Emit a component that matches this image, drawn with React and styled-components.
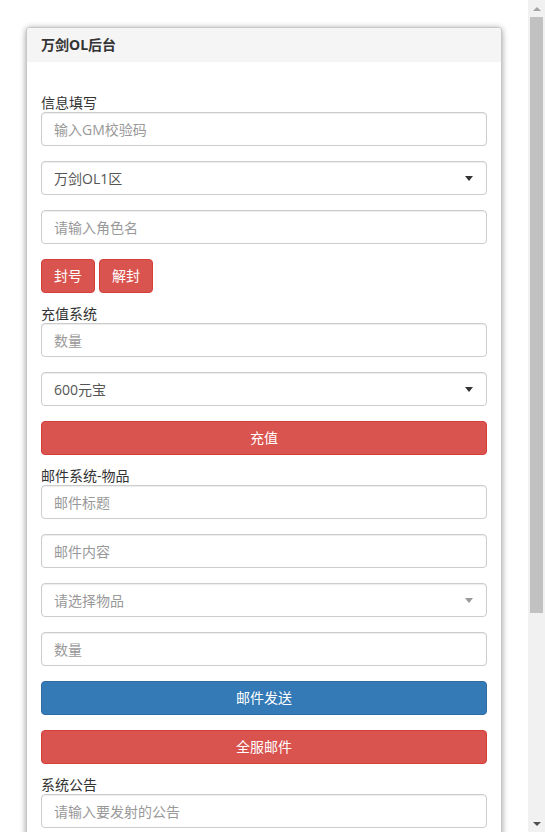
import styled, { createGlobalStyle } from "styled-components";

const GlobalStyle = createGlobalStyle`
  html, body {
    margin: 0;
    padding: 0;
    height: 100%;
    overflow: hidden;
    background: #fff;
  }
  body {
    font-family: "Open Sans", "Noto Sans CJK SC", sans-serif;
    font-size: 14px;
    color: #333;
  }
  * {
    box-sizing: border-box;
  }
`;

const Page = styled.div`
  display: flex;
  height: 100vh;
`;

const Main = styled.div`
  flex: 1;
  padding: 27px 26px 0;
  overflow: hidden;
`;

const Scrollbar = styled.div`
  width: 17px;
  background: #f1f1f1;
  display: flex;
  flex-direction: column;
`;

const ScrollArrow = styled.div`
  height: 17px;
  display: flex;
  align-items: center;
  justify-content: center;

  &::after {
    content: "";
    border-left: 4px solid transparent;
    border-right: 4px solid transparent;
    ${(props) =>
      props.down
        ? "border-top: 4px solid #505050;"
        : "border-bottom: 4px solid #a3a3a3;"}
  }
`;

const ScrollThumb = styled.div`
  height: 596px;
  margin: 0 2px;
  background: #c1c1c1;
`;

const ScrollTrack = styled.div`
  flex: 1;
`;

const Panel = styled.div`
  background: #fff;
  border: 1px solid #c8c8c8;
  border-radius: 4px;
  box-shadow: 0 1px 6px rgba(0, 0, 0, 0.4);
  min-height: 900px;
`;

const PanelHeading = styled.div`
  background: #f5f5f5;
  padding: 7px 14px;
  line-height: 20px;
  font-weight: bold;
  color: #333;
  border-radius: 3px 3px 0 0;
`;

const PanelBody = styled.div`
  padding: 30px 14px 15px;
`;

const Label = styled.div`
  padding-top: 2px;
  line-height: 18px;
  color: #333;
`;

const FormGroup = styled.div`
  margin-bottom: 15px;
  position: relative;
`;

const Input = styled.input`
  display: block;
  width: 100%;
  height: 34px;
  padding: 6px 12px;
  font: inherit;
  font-size: 14px;
  color: #555;
  background: #fff;
  border: 1px solid #ccc;
  border-radius: 4px;
  box-shadow: inset 0 1px 1px rgba(0, 0, 0, 0.075);
  outline: none;

  &::placeholder {
    color: #999;
  }
`;

const SelectBox = styled.select`
  display: block;
  width: 100%;
  height: 34px;
  padding: 6px 12px;
  font: inherit;
  font-size: 14px;
  color: ${(props) => (props.placeholder ? "#999" : "#555")};
  background: #fff;
  border: 1px solid #ccc;
  border-radius: 4px;
  box-shadow: inset 0 1px 1px rgba(0, 0, 0, 0.075);
  appearance: none;
  outline: none;
`;

const Caret = styled.span`
  position: absolute;
  right: 14px;
  top: 15px;
  border-left: 4px solid transparent;
  border-right: 4px solid transparent;
  border-top: 5px solid ${(props) => (props.muted ? "#999" : "#333")};
  pointer-events: none;
`;

const ButtonRow = styled.div`
  display: flex;
  gap: 4px;
  margin-bottom: 10px;
`;

const Button = styled.button`
  height: 34px;
  padding: 6px 12px;
  font: inherit;
  font-size: 14px;
  line-height: 20px;
  color: #fff;
  border-radius: 4px;
  border: 1px solid
    ${(props) => (props.variant === "primary" ? "#2e6da4" : "#d43f3a")};
  background: ${(props) =>
    props.variant === "primary" ? "#337ab7" : "#d9534f"};
  flex: ${(props) => (props.block ? 1 : "none")};
  cursor: pointer;
`;

const Select = ({ children, placeholder }) => (
  <FormGroup>
    <SelectBox placeholder={placeholder ? 1 : undefined} defaultValue="">
      <option value="">{children}</option>
    </SelectBox>
    <Caret muted={placeholder} />
  </FormGroup>
);

const Field = ({ placeholder }) => (
  <FormGroup>
    <Input placeholder={placeholder} />
  </FormGroup>
);

const App = () => {
  return (
    <Page>
      <GlobalStyle />
      <Main>
        <Panel>
          <PanelHeading>万剑OL后台</PanelHeading>
          <PanelBody>
            <Label>信息填写</Label>
            <Field placeholder="输入GM校验码" />
            <Select>万剑OL1区</Select>
            <Field placeholder="请输入角色名" />
            <ButtonRow>
              <Button>封号</Button>
              <Button>解封</Button>
            </ButtonRow>

            <Label>充值系统</Label>
            <Field placeholder="数量" />
            <Select>600元宝</Select>
            <ButtonRow>
              <Button block>充值</Button>
            </ButtonRow>

            <Label>邮件系统-物品</Label>
            <Field placeholder="邮件标题" />
            <Field placeholder="邮件内容" />
            <Select placeholder>请选择物品</Select>
            <Field placeholder="数量" />
            <FormGroup>
              <ButtonRow>
                <Button block variant="primary">
                  邮件发送
                </Button>
              </ButtonRow>
            </FormGroup>
            <ButtonRow>
              <Button block>全服邮件</Button>
            </ButtonRow>

            <Label>系统公告</Label>
            <Field placeholder="请输入要发射的公告" />
          </PanelBody>
        </Panel>
      </Main>
      <Scrollbar>
        <ScrollArrow />
        <ScrollThumb />
        <ScrollTrack />
        <ScrollArrow down />
      </Scrollbar>
    </Page>
  );
};

export default App;
